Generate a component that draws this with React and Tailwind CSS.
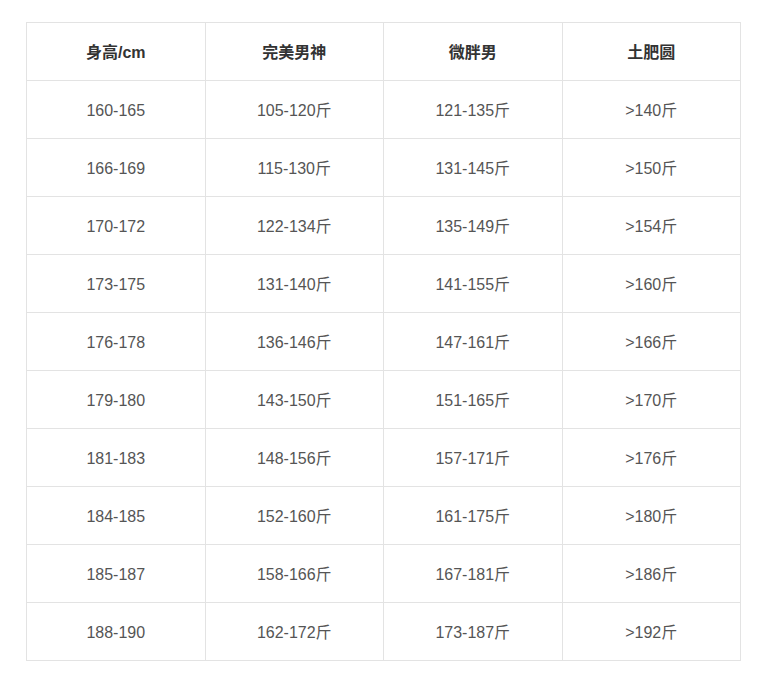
import React from "react";

const rows = [
  ["160-165", "105-120斤", "121-135斤", ">140斤"],
  ["166-169", "115-130斤", "131-145斤", ">150斤"],
  ["170-172", "122-134斤", "135-149斤", ">154斤"],
  ["173-175", "131-140斤", "141-155斤", ">160斤"],
  ["176-178", "136-146斤", "147-161斤", ">166斤"],
  ["179-180", "143-150斤", "151-165斤", ">170斤"],
  ["181-183", "148-156斤", "157-171斤", ">176斤"],
  ["184-185", "152-160斤", "161-175斤", ">180斤"],
  ["185-187", "158-166斤", "167-181斤", ">186斤"],
  ["188-190", "162-172斤", "173-187斤", ">192斤"],
];

const App = () => {
  return (
    <div
      className="bg-white w-[762px] h-[680px] pl-[26px] pt-[22px]"
      style={{ fontFamily: '"Liberation Sans", Arial, "Noto Sans CJK SC", sans-serif' }}
    >
      <table className="w-[715px] table-fixed border-collapse text-[16px]">
        <thead>
          <tr className="h-[58px]">
            {["身高/cm", "完美男神", "微胖男", "土肥圆"].map((h) => (
              <th
                key={h}
                className="border border-[#e3e3e3] font-bold text-[#333] text-center pt-[2px]"
              >
                {h}
              </th>
            ))}
          </tr>
        </thead>
        <tbody>
          {rows.map((r) => (
            <tr key={r[0]} className="h-[58px]">
              {r.map((c, i) => (
                <td
                  key={i}
                  className="border border-[#e3e3e3] text-[#555] text-center pt-[2px]"
                >
                  {c}
                </td>
              ))}
            </tr>
          ))}
        </tbody>
      </table>
    </div>
  );
};

export default App;
